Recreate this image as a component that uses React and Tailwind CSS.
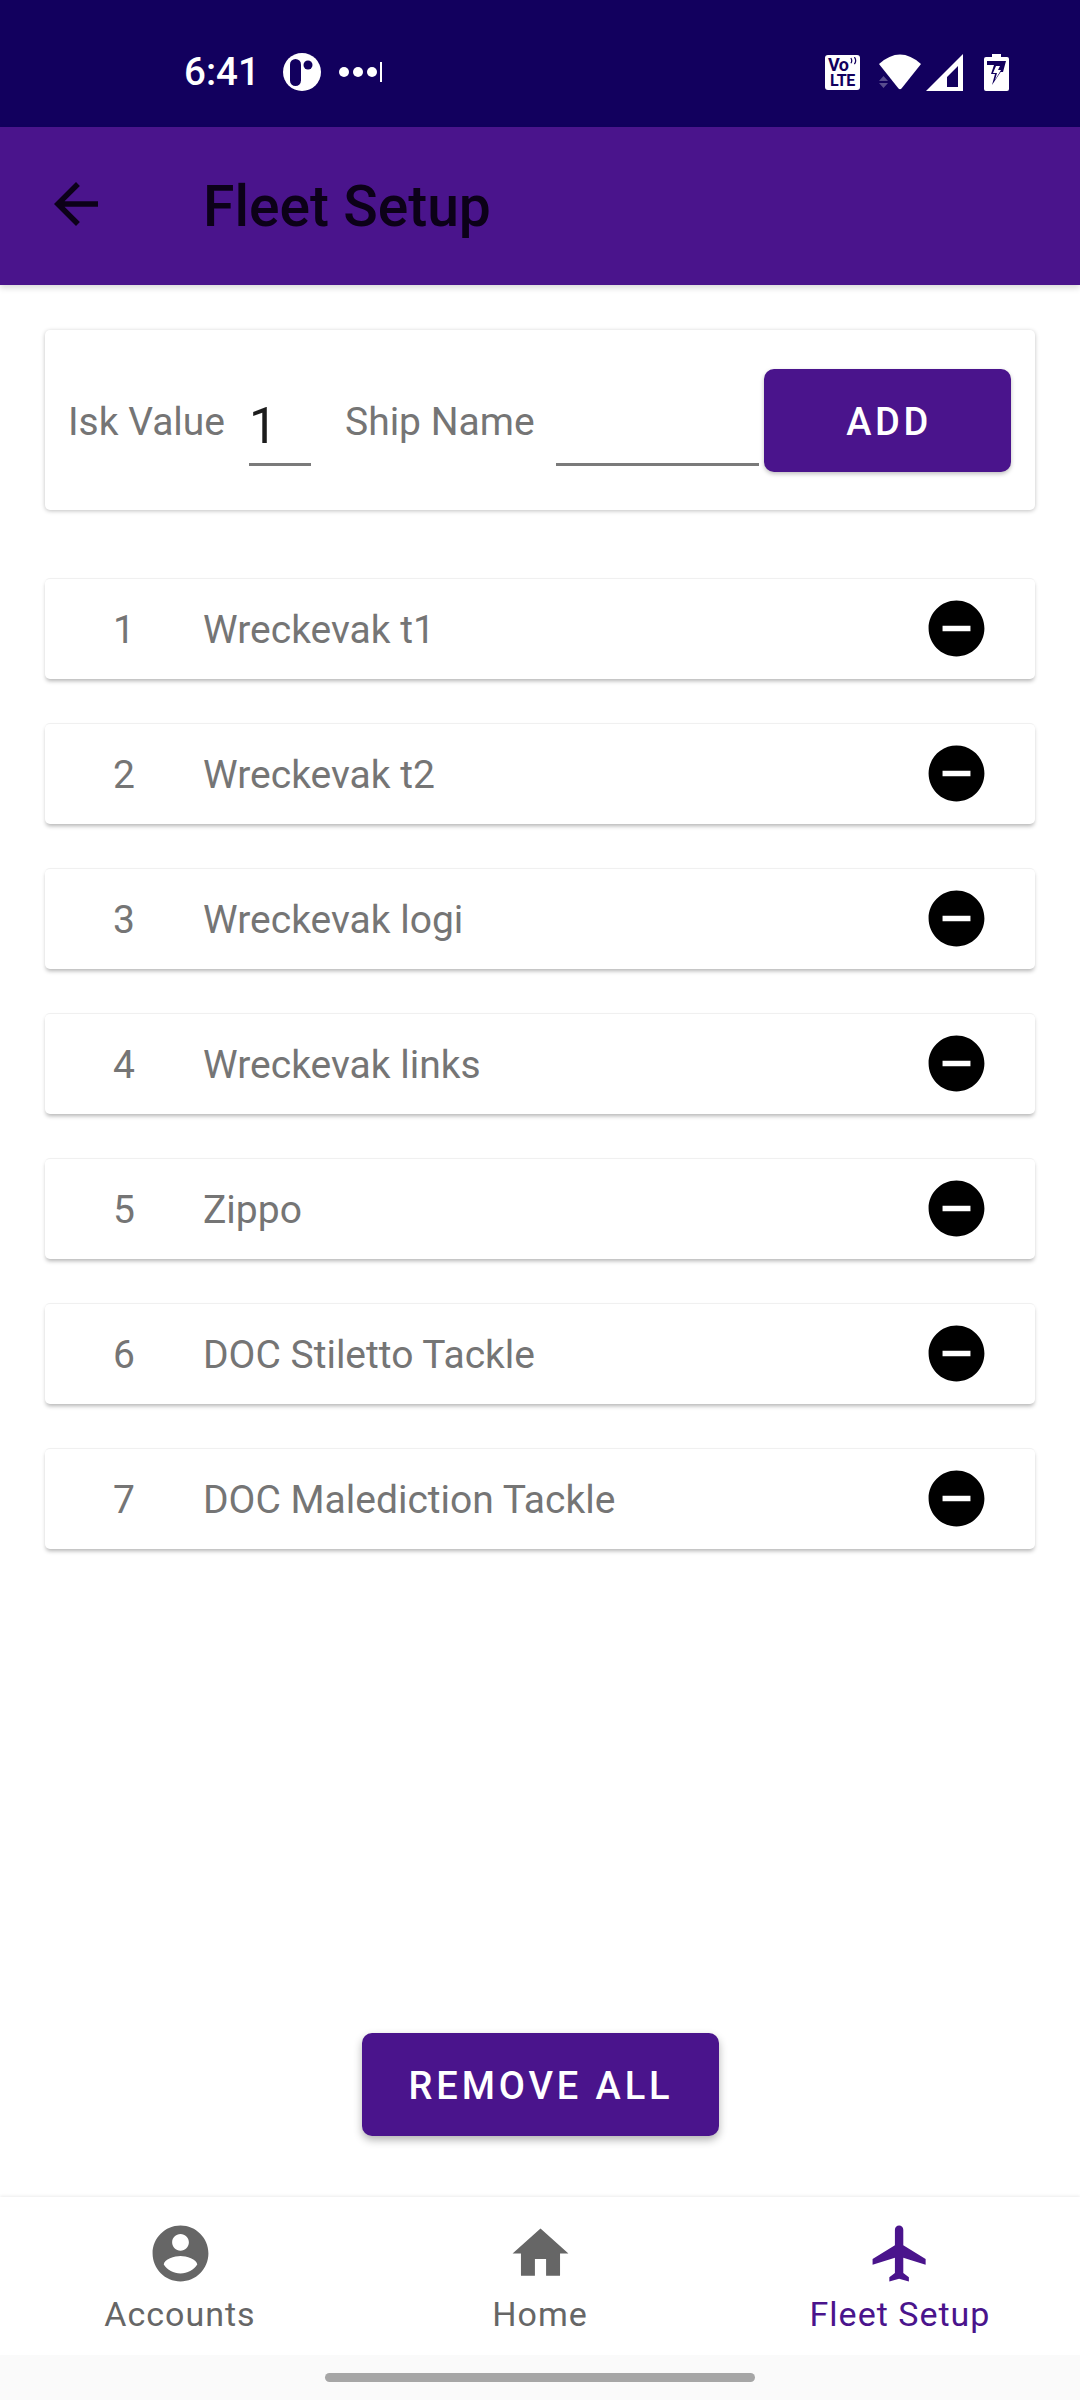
import { useState } from 'react';

const ships = [
  'Wreckevak t1',
  'Wreckevak t2',
  'Wreckevak logi',
  'Wreckevak links',
  'Zippo',
  'DOC Stiletto Tackle',
  'DOC Malediction Tackle',
];

function Icon({ d, className }) {
  return (
    <svg viewBox="0 0 24 24" fill="currentColor" className={className}>
      <path d={d} />
    </svg>
  );
}

function StatusBar() {
  return (
    <div className="h-[127px] bg-[#12005e] flex items-center text-white shrink-0 pt-[17px]">
      <span className="ml-[184px] w-[74px] text-[38.5px] leading-[40px] font-medium">6:41</span>
      {/* notification icon */}
      <svg viewBox="0 0 38 38" className="ml-[25px] w-[38px] h-[38px]">
        <circle cx="19" cy="19" r="19" fill="#fff" />
        <rect x="7" y="6" width="11" height="27" rx="5.5" fill="#12005e" />
        <circle cx="25" cy="12" r="4.5" fill="#12005e" />
      </svg>
      <div className="ml-[18px] flex items-center gap-[4px]">
        <div className="w-[10px] h-[10px] rounded-full bg-white" />
        <div className="w-[10px] h-[10px] rounded-full bg-white" />
        <div className="w-[10px] h-[10px] rounded-full bg-white" />
        <div className="ml-[-1px] w-[2px] h-[20px] bg-white" />
      </div>
      <div className="ml-auto mr-[71px] flex items-center">
        <div className="w-[35px] h-[35px] rounded-[3px] bg-white text-[#12005e] flex flex-col items-center justify-center font-bold">
          <div className="w-full pl-[3px] flex items-start h-[16px]">
            <span className="text-[18px] leading-[16px] tracking-[-0.5px]">Vo</span>
            <svg viewBox="0 0 8 10" className="ml-[1px] w-[7px] h-[9px]">
              <path d="M1 1 Q3 4 1 7 M5 0 Q8 4 5 8" fill="none" stroke="#12005e" strokeWidth="1.4" />
            </svg>
          </div>
          <span className="text-[16px] leading-[15px] tracking-[-0.3px]">LTE</span>
        </div>
        {/* wifi */}
        <svg viewBox="0 0 42 36" className="ml-[19px] w-[42px] h-[36px]">
          <path d="M0 10 Q21 -9 42 10 L22.5 34.5 Q21 36 19.5 34.5 Z" fill="#fff" />
          <path d="M0 27 L4.5 22 L9 27 Z M0 29 L9 29 L4.5 34 Z" fill="#fff" fillOpacity="0.3" />
        </svg>
        {/* signal */}
        <svg viewBox="0 0 37 37" className="ml-[5px] w-[37px] h-[37px]">
          <path fillRule="evenodd" d="M37 0 V37 H0 Z M32 12 L21 23 V33 H32 Z" fill="#fff" />
        </svg>
        {/* battery charging */}
        <svg viewBox="0 0 25 37" className="ml-[21px] w-[25px] h-[37px]">
          <path d="M8 0 H17 V3 H23 Q25 3 25 5 V35 Q25 37 23 37 H2 Q0 37 0 35 V5 Q0 3 2 3 H8 Z" fill="#fff" />
          <path d="M3 7 H22 L19 18 H15 L18 16 L8 31 L11 20 H7 L10 11 H3 Z" fill="#12005e" />
          <path d="M12 12 L9 19 H13 L11 26 L17 16 H14 L16 12 Z" fill="#fff" />
        </svg>
      </div>
    </div>
  );
}

function Header() {
  return (
    <div className="h-[158px] bg-[#4a148c] flex items-center shrink-0 shadow-[0_3px_6px_rgba(0,0,0,0.15)]">
      <Icon
        d="M20 11H7.83l5.59-5.59L12 4l-8 8 8 8 1.41-1.41L7.83 13H20v-2z"
        className="ml-[43px] w-[66px] h-[66px] text-[#0c0118] -mt-[4px]"
      />
      <h1 className="ml-[94px] text-[57px] leading-[60px] font-medium text-[#0c0118] mt-[2px]">Fleet Setup</h1>
    </div>
  );
}

function AddCard({ isk, setIsk, name, setName }) {
  return (
    <div className="mx-[45px] mt-[45px] h-[180px] rounded-[5px] bg-white shadow-[0_1px_4px_rgba(0,0,0,0.25)] flex items-center pl-[23px]">
      <span className="text-[39px] text-[#757575] w-[181px] mt-[4px]">Isk Value</span>
      <input
        value={isk}
        onChange={(e) => setIsk(e.target.value)}
        className="w-[62px] h-[76px] mt-[15px] border-b-[3px] border-[#7a7a7a] text-[50px] text-[#1c1c1c] outline-none"
      />
      <span className="ml-[34px] w-[211px] text-[39px] text-[#757575] mt-[4px]">Ship Name</span>
      <input
        value={name}
        onChange={(e) => setName(e.target.value)}
        className="w-[203px] h-[76px] mt-[15px] border-b-[3px] border-[#7a7a7a] text-[50px] text-[#1c1c1c] outline-none"
      />
      <button className="ml-[5px] w-[247px] h-[103px] mt-[1px] pt-[3px] pl-[3px] rounded-[10px] bg-[#4a148c] text-white text-[38px] font-medium tracking-[3.6px] shadow-[0_2px_4px_rgba(0,0,0,0.25)]">
        ADD
      </button>
    </div>
  );
}

function ShipRow({ index, name }) {
  return (
    <div className="mx-[45px] h-[101px] rounded-[5px] bg-white shadow-[0_3px_4px_-1px_rgba(0,0,0,0.3)] border-t border-[#f0f0f0] flex items-center">
      <span className="w-[158px] text-center text-[39px] text-[#757575] mt-[3px]">{index}</span>
      <span className="text-[39px] text-[#757575] mt-[3px]">{name}</span>
      <Icon
        d="M12 2C6.48 2 2 6.48 2 12s4.48 10 10 10 10-4.48 10-10S17.52 2 12 2zm5 11H7v-2h10v2z"
        className="ml-auto mr-[45px] w-[67px] h-[67px] text-black -mt-[1px]"
      />
    </div>
  );
}

function NavItem({ d, label, active }) {
  return (
    <div className={`flex-1 flex flex-col items-center pt-[23px] ${active ? 'text-[#4a148c]' : 'text-[#666666]'}`}>
      <Icon d={d} className="w-[67px] h-[67px]" />
      <span className="mt-[7px] text-[34px] leading-[40px] tracking-[1px]">{label}</span>
    </div>
  );
}

export default function App() {
  const [isk, setIsk] = useState('1');
  const [name, setName] = useState('');

  return (
    <div className="w-[1080px] h-[2400px] flex flex-col bg-white font-['Roboto',sans-serif]">
      <StatusBar />
      <Header />

      <main className="flex-1 flex flex-col">
        <AddCard isk={isk} setIsk={setIsk} name={name} setName={setName} />
        <div className="mt-[68px] flex flex-col gap-[44px]">
          {ships.map((s, i) => (
            <ShipRow key={s} index={i + 1} name={s} />
          ))}
        </div>
        <button className="mt-auto mb-[61px] self-center w-[357px] h-[103px] rounded-[10px] bg-[#4a148c] text-white text-[38px] font-medium tracking-[3.9px] pt-[4px] pl-[2px] shadow-[0_4px_8px_rgba(0,0,0,0.3)]">
          REMOVE ALL
        </button>
      </main>

      <nav className="h-[158px] flex bg-white shrink-0 shadow-[0_-1px_3px_rgba(0,0,0,0.08)]">
        <NavItem
          label="Accounts"
          d="M12 2C6.48 2 2 6.48 2 12s4.48 10 10 10 10-4.48 10-10S17.52 2 12 2zm0 3c1.66 0 3 1.34 3 3s-1.34 3-3 3-3-1.34-3-3 1.34-3 3-3zm0 14.2c-2.5 0-4.71-1.28-6-3.22.03-1.99 4-3.08 6-3.08 1.99 0 5.97 1.09 6 3.08-1.29 1.94-3.5 3.22-6 3.22z"
        />
        <NavItem label="Home" d="M10 20v-6h4v6h5v-8h3L12 3 2 12h3v8z" />
        <NavItem
          active
          label="Fleet Setup"
          d="M21 16v-2l-8-5V3.5c0-.83-.67-1.5-1.5-1.5S10 2.67 10 3.5V9l-8 5v2l8-2.5V19l-2 1.5V22l3.5-1 3.5 1v-1.5L13 19v-5.5l8 2.5z"
        />
      </nav>

      <div className="h-[45px] bg-[#fafafa] flex justify-center pt-[18px] shrink-0">
        <div className="w-[430px] h-[9px] rounded-full bg-[#a6a6a6]" />
      </div>
    </div>
  );
}
